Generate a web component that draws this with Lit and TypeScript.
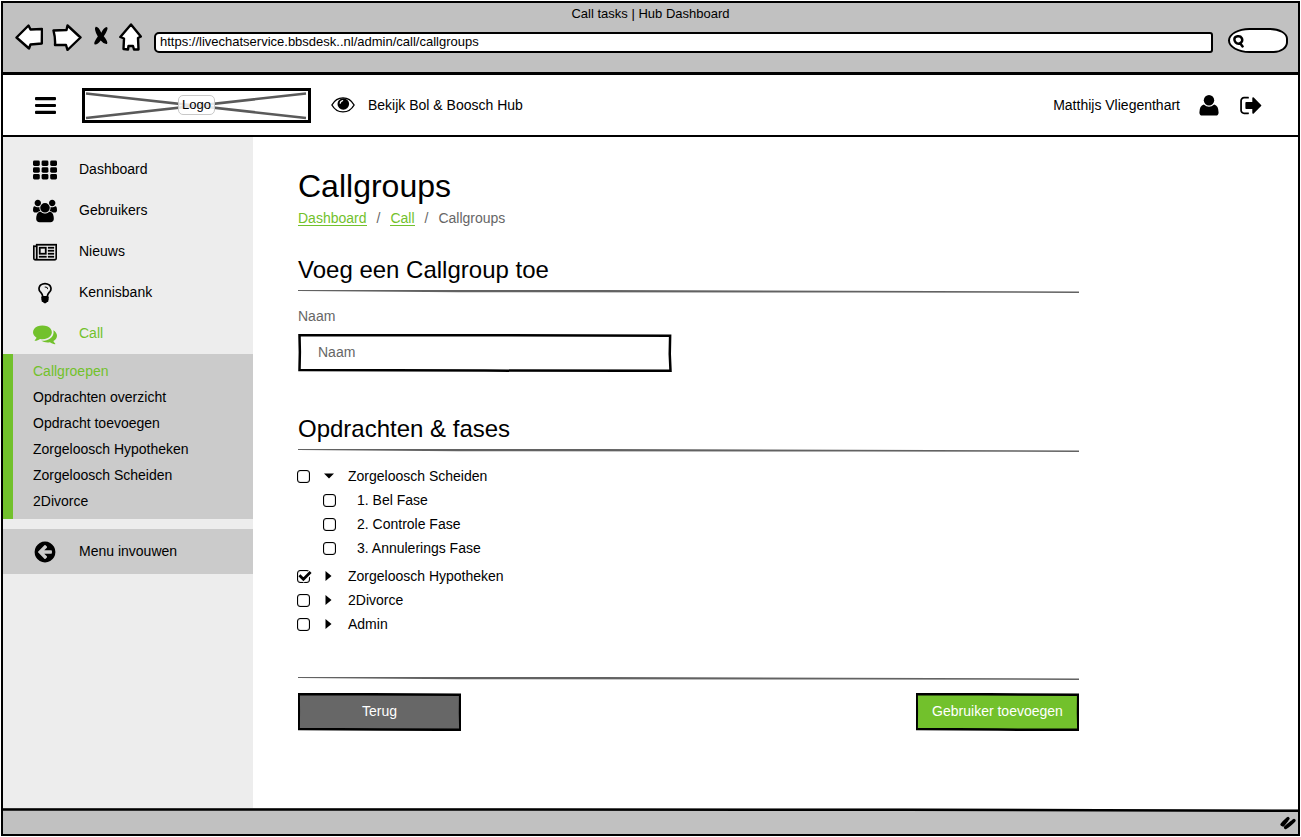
import { LitElement, html, css, svg, nothing } from "lit";
import { customElement, property, state } from "lit/decorators.js";

const ICONS: Record<string, { box: string; body: unknown }> = {
  th: {
    box: "0 -2.5 24 24",
    body: svg`<g>${[0, 8.6, 17.2].map((x) =>
      [0, 6.8, 13.6].map((y) => svg`<rect x=${x} y=${y} width="6.8" height="5.4" rx="1.4"/>`)
    )}</g>`,
  },
  users: {
    box: "0 0 1920 1792",
    body: svg`<path d="M593 896q-162 5-265 128h-134q-82 0-138-40.5t-56-118.5q0-353 124-353 6 0 43.5 21t97.5 42.5 119 21.5q67 0 133-23-5 37-5 66 0 139 81 256zm1071 637q0 120-73 189.5t-194 69.5h-874q-121 0-194-69.5t-73-189.5q0-53 3.5-103.5t14-109 26.5-108.5 43-97.5 62-81 85.5-53.5 111.5-20q10 0 43 21.5t73 48 107 48 135 21.5 135-21.5 107-48 73-48 43-21.5q61 0 111.5 20t85.5 53.5 62 81 43 97.5 26.5 108.5 14 109 3.5 103.5zm-1024-1277q0 106-75 181t-181 75-181-75-75-181 75-181 181-75 181 75 75 181zm704 384q0 159-112.5 271.5t-271.5 112.5-271.5-112.5-112.5-271.5 112.5-271.5 271.5-112.5 271.5 112.5 112.5 271.5zm576 225q0 78-56 118.5t-138 40.5h-134q-103-123-265-128 81-117 81-256 0-29-5-66 66 23 133 23 59 0 119-21.5t97.5-42.5 43.5-21q124 0 124 353zm-128-609q0 106-75 181t-181 75-181-75-75-181 75-181 181-75 181 75 75 181z"/>`,
  },
  news: {
    box: "0 -80 2048 1792",
    body: svg`<path d="M1024 512h-384v384h384v-384zm128 640v128h-640v-128h640zm0-768v640h-640v-640h640zm640 768v128h-512v-128h512zm0-256v128h-512v-128h512zm0-256v128h-512v-128h512zm0-256v128h-512v-128h512zm-1536 960v-960h-128v960q0 26 19 45t45 19 45-19 19-45zm1664 0v-1088h-1536v1088q0 33-11 64h1483q26 0 45-19t19-45zm128-1216v1216q0 80-56 136t-136 56h-1664q-80 0-136-56t-56-136v-1088h256v-128h1792z" stroke="currentColor" stroke-width="24"/>`,
  },
  bulb: {
    box: "0 0 1792 1792",
    body: svg`<path d="M1120 576q0 13-9.5 22.5t-22.5 9.5-22.5-9.5-9.5-22.5q0-46-54-71t-106-25q-13 0-22.5-9.5t-9.5-22.5 9.5-22.5 22.5-9.5q50 0 99.5 16t87 54 37.5 90zm160 0q0-72-34.5-134t-90-101.5-123-62-136.5-22.5-136.5 22.5-123 62-90 101.5-34.5 134q0 101 68 180 10 11 30.5 33t30.5 33q128 153 141 298h228q13-145 141-298 10-11 30.5-33t30.5-33q68-79 68-180zm128 0q0 155-103 268-45 49-74.5 87t-59.5 95.5-34 107.5q47 28 47 82 0 37-25 64 25 27 25 64 0 52-45 81 13 23 13 47 0 46-31.5 71t-77.5 25q-20 44-60 70t-87 26-87-26-60-70q-46 0-77.5-25t-31.5-71q0-24 13-47-45-29-45-81 0-37 25-64-25-27-25-64 0-54 47-82-4-50-34-107.5t-59.5-95.5-74.5-87q-103-113-103-268 0-99 44.5-184.5t117-142 164-89 186.5-32.5 186.5 32.5 164 89 117 142 44.5 184.5z"/>`,
  },
  comments: {
    box: "0 0 1792 1792",
    body: svg`<path d="M1408 768q0 139-94 257t-256.5 186.5-353.5 68.5q-86 0-176-16-124 88-278 128-36 9-86 16h-3q-11 0-20.5-8t-11.5-21q-1-3-1-6.5t.5-6.5 2-6l2.5-5t3.5-5.5 4-5 4.5-5 4-4.5q5-6 23-25t26-29.5 22.5-29 25-38.5 20.5-44q-124-72-195-177t-71-224q0-139 94-257t256.5-186.5 353.5-68.5 353.5 68.5 256.5 186.5 94 257zm384 256q0 120-71 224.5t-195 176.5q10 24 20.5 44t25 38.5 22.5 29 26 29.5 23 25q1 1 4 4.5t4.5 5 4 5 3.5 5.5l2.5 5t2 6 .5 6.5-1 6.5q-3 14-13 22t-22 7q-50-7-86-16-154-40-278-128-90 16-176 16-271 0-472-132 58 4 88 4 161 0 309-45t264-129q125-92 192-212t67-254q0-77-23-152 129 71 204 178t75 230z"/>`,
  },
  fold: {
    box: "10 10 1772 1772",
    body: svg`<path d="M1408 960v-128q0-26-19-45t-45-19h-502l189-189q19-19 19-45t-19-45l-91-91q-18-18-45-18t-45 18l-362 362-91 91q-18 18-18 45t18 45l91 91 362 362q18 18 45 18t45-18l91-91q18-18 18-45t-18-45l-189-189h502q26 0 45-19t19-45zm256-64q0 209-103 385.5t-279.5 279.5-385.5 103-385.5-103-279.5-279.5-103-385.5 103-385.5 279.5-279.5 385.5-103 385.5 103 279.5 279.5 103 385.5z"/>`,
  },
  user: {
    box: "0 0 20 21",
    body: svg`<circle cx="10" cy="5.200" r="5.200"/><path d="M4.800 9.500Q10 14 15.200 9.500 19.500 10.500 19.600 17.500 19.600 20.600 16.800 20.600H3.200Q.4 20.600 .4 17.500 .5 10.500 4.800 9.500Z"/>`,
  },
  signout: {
    box: "64 192 1600 1408",
    body: svg`<path d="M704 1440q0 4 1 20t.5 26.5-3 23.5-10 19.5-20.5 6.5h-320q-119 0-203.5-84.5t-84.5-203.5v-704q0-119 84.5-203.5t203.5-84.5h320q13 0 22.5 9.5t9.5 22.5q0 4 1 20t.5 26.5-3 23.5-10 19.5-20.5 6.5h-320q-66 0-113 47t-47 113v704q0 66 47 113t113 47h312l11.5 1 11.5 3 8 5.5 7 9 2 13.5zm928-544q0 26-19 45l-544 544q-19 19-45 19t-45-19-19-45v-288h-448q-26 0-45-19t-19-45v-384q0-26 19-45t45-19h448v-288q0-26 19-45t45-19 45 19l544 544q19 19 19 45z"/>`,
  },
  eye: {
    box: "0 0 24 16",
    body: svg`<path d="M.9 8C3.500 3.400 7.600 .9 12 .9S20.500 3.400 23.100 8C20.500 12.600 16.400 14.900 12 14.900S3.500 12.600 .9 8Z" fill="#fff" stroke="currentColor" stroke-width="1.400"/><circle cx="12.300" cy="7" r="5.800"/><path d="M9.200 6.200a3 3 0 0 1 2.400-2.500" fill="none" stroke="#fff" stroke-width="1.300" stroke-linecap="round"/>`,
  },
  bars: {
    box: "0 0 22 17",
    body: svg`<rect x="0" y="0" width="21" height="3.200" rx="1"/><rect x="0" y="6.900" width="21" height="3.200" rx="1"/><rect x="0" y="13.800" width="21" height="3.200" rx="1"/>`,
  },
  back: {
    box: "0 0 28 28",
    body: svg`<path class="pen" d="M1.500 14.500 13.500 2.500 15.500 6.500 27 6 26.800 20.500 15.500 21.500 14 25.500Z"/>`,
  },
  forward: {
    box: "0 0 30 28",
    body: svg`<path class="pen" d="M1.500 7.500Q8 7 14.500 7L15.500 2.500 28.500 14.500 15.500 27 14 22 3 22Q3.500 15 1.500 7.500Z"/>`,
  },
  stop: {
    box: "0 0 17 28",
    body: svg`<path d="M4.200 3.700Q7 3.200 9.800 9.800 12 4.500 15.500 4Q17.500 5.500 12.300 13.200 17 19 15.500 21 12.500 21.500 9.200 17.500 6 22 3.200 21.500 1.500 20 6.300 13.500 2 6 4.200 3.700Z"/>`,
  },
  home: {
    box: "0 0 24 28",
    body: svg`<path class="pen" d="M13 1.500 22.800 13.500 20 15 20.500 26.500 16 26.500 15 23 10.500 23 10 26.500 5.500 26 6 15.500 2.300 14Z"/>`,
  },
  search: {
    box: "0 0 12 13",
    body: svg`<path d="M2.200 4.500C2.500 2 7.500 1 9 3.800S8 9 6 9 2 7.500 2.200 4.500ZM7.500 8.500 9.800 11.500" fill="none" stroke="currentColor" stroke-width="2.300" stroke-linecap="round"/>`,
  },
  grip: {
    box: "0 0 18 14",
    body: svg`<path d="M3 8.500Q5 6 9 2.500M6.500 11.500Q10 9.500 15 4.500M4 9 8 4M7.500 10.500 13 6" fill="none" stroke="currentColor" stroke-width="3.300" stroke-linecap="round"/>`,
  },
  check: {
    box: "0 0 17 15",
    body: svg`<path d="M4.800 7 7.800 10.200 15 3" fill="none" stroke="#fff" stroke-width="5"/><path d="M3.400 6.200 7.400 10.200 14.600 3" fill="none" stroke="currentColor" stroke-width="2.800"/>`,
  },
  right: { box: "0 0 10 10", body: svg`<path d="M1.500 0 7.500 5 1.500 10Z"/>` },
  down: { box: "0 0 10 10", body: svg`<path d="M0 2.500H10L5 7.500Z"/>` },
};

@customElement("ui-icon")
class UiIcon extends LitElement {
  @property() name = "";
  static styles = css`
    :host { display: block; flex: none; }
    svg { display: block; width: 100%; height: 100%; fill: currentColor; }
    .pen { fill: #fff; stroke: #000; stroke-width: 2.4; stroke-linejoin: round; }
  `;
  render() {
    const icon = ICONS[this.name];
    return icon ? html`<svg viewBox=${icon.box} aria-hidden="true">${icon.body}</svg>` : nothing;
  }
}

@customElement("sketch-rule")
class SketchRule extends LitElement {
  static styles = css`
    :host { display: block; height: 3px; }
    svg { display: block; width: 100%; height: 100%; }
  `;
  render() {
    return html`<svg viewBox="0 0 780 3" preserveAspectRatio="none" aria-hidden="true">
      <path d="M0 0 300 0 780 1.400V2.900L560 2.500 160 2.200 0 1Z" fill="#626262" />
    </svg>`;
  }
}

/* Hand-drawn frame that stretches round whatever is slotted into it. */
@customElement("sketch-frame")
class SketchFrame extends LitElement {
  static styles = css`
    :host { display: grid; height: 38px; }
    svg, ::slotted(*) { grid-area: 1 / 1; }
    svg { display: block; width: 100%; height: 100%; min-width: 0; fill: var(--frame-fill, #fff); }
    path { stroke: #000; stroke-width: 2.5px; vector-effect: non-scaling-stroke; }
  `;
  render() {
    return html`<svg viewBox="0 0 200 38" preserveAspectRatio="none" aria-hidden="true">
        <path d="M.8 1.300 80 1.200 199 1.800 198.800 20 199.200 36.800 100 36.600 .8 36 1 18Z" />
      </svg>
      <slot></slot>`;
  }
}

interface Group {
  name: string;
  open: boolean;
  checked: boolean;
  phases: string[];
}

@customElement("app-root")
class AppRoot extends LitElement {
  @state() groups: Group[] = [
    { name: "Zorgeloosch Scheiden", open: true, checked: false, phases: ["1. Bel Fase", "2. Controle Fase", "3. Annulerings Fase"] },
    { name: "Zorgeloosch Hypotheken", open: false, checked: true, phases: [] },
    { name: "2Divorce", open: false, checked: false, phases: [] },
    { name: "Admin", open: false, checked: false, phases: [] },
  ];

  menu = [
    { icon: "th", label: "Dashboard" },
    { icon: "users", label: "Gebruikers" },
    { icon: "news", label: "Nieuws" },
    { icon: "bulb", label: "Kennisbank" },
    { icon: "comments", label: "Call", active: true },
  ];

  submenu = [
    "Callgroepen",
    "Opdrachten overzicht",
    "Opdracht toevoegen",
    "Zorgeloosch Hypotheken",
    "Zorgeloosch Scheiden",
    "2Divorce",
  ];

  static styles = css`
    :host {
      --green: #72c12c;
      --chrome: #c1c1c1;
      display: block;
      box-sizing: border-box;
      min-height: 100vh;
      padding: 1px;
      background: #fff;
      color: #000;
      font: 14px/20px "Liberation Sans", Arial, sans-serif;
    }
    *, *::before { box-sizing: border-box; }
    a { color: inherit; text-decoration: none; }
    button, input { font: inherit; color: inherit; margin: 0; padding: 0; border: 0; background: none; }
    button { cursor: pointer; }
    ul, ol { list-style: none; margin: 0; padding: 0; }
    h1, h2 { margin: 0; font-weight: 400; }

    .window { display: flex; flex-direction: column; min-height: calc(100vh - 2px); border: 2px solid #000; }

    .chrome { background: var(--chrome); border-bottom: 3px solid #000; padding-bottom: 19px; }
    .title { text-align: center; font-size: 13px; line-height: 22px; }
    .toolbar { display: flex; align-items: flex-end; padding: 0 10px 0 12px; height: 28px; }
    .tools { display: flex; gap: 9px; padding-bottom: 2px; }
    .tools ui-icon { height: 28px; }
    .w-back { width: 28px; }
    .w-forward { width: 30px; }
    .w-stop { width: 18px; }
    .w-home { width: 24px; }
    .url {
      flex: 1;
      min-width: 0;
      height: 21px;
      margin: 0 15px 0 12px;
      padding: 0 4px 2px;
      background: #fff;
      border: 2px solid #000;
      border-radius: 5px 3px 3px 5px;
      font-size: 13px;
    }
    .search {
      display: flex;
      align-items: center;
      width: 60px;
      height: 25px;
      padding-left: 2px;
      background: #fff;
      border: 2px solid #000;
      border-radius: 24px 20px 16px 24px / 14px 12px 12px 14px;
    }
    .search ui-icon { width: 13px; height: 14px; }
    .search input { min-width: 0; flex: 1; }

    .header { display: flex; align-items: center; height: 62px; padding: 0 36px 0 32px; border-bottom: 2px solid #000; }
    .burger ui-icon { width: 22px; height: 17px; }
    .logo { display: grid; place-items: center; width: 229px; height: 35px; margin: 0 20px 0 25px; border: 3px solid #000; }
    .logo svg, .logo span { grid-area: 1 / 1; }
    .logo svg { width: 100%; height: 100%; }
    .logo span { padding: 0 3px; font-size: 13px; line-height: 18px; border: 1px solid #c8c8c8; border-radius: 5px; background: rgba(255, 255, 255, 0.85); }
    .hub { display: flex; align-items: center; gap: 13px; }
    .hub ui-icon { width: 24px; height: 16px; }
    .account { display: flex; align-items: center; margin-left: auto; }
    .account .user { width: 20px; height: 21px; margin: 0 21px 0 19px; }
    .account .out { width: 22px; height: 19px; }

    .body { flex: 1; display: flex; }
    .sidebar { flex: none; width: 250px; padding-top: 12px; background: #ededed; }
    .item { display: grid; grid-template-columns: 24px 1fr; column-gap: 22px; align-items: center; width: 100%; height: 41px; padding-left: 30px; text-align: left; }
    .item ui-icon { width: 24px; height: 24px; }
    .item span { padding-bottom: 2px; }
    .active { color: var(--green); }
    .submenu { padding: 4px 0 5px 20px; background: #cbcbcb; border-left: 10px solid var(--green); }
    .submenu a { display: block; line-height: 26px; }
    .collapse { height: 45px; margin-top: 10px; background: #cbcbcb; }

    .content { flex: 1; min-width: 0; padding: 29px 45px 40px; }
    .column { max-width: 781px; }
    h1 { font-size: 32px; line-height: 40px; }
    h2 { margin-bottom: 5px; font-size: 24px; line-height: 30px; }
    .crumbs { display: flex; gap: 10px; margin: 2px 0 27px; color: #666; }
    .crumbs li { display: flex; gap: 10px; }
    .crumbs li + li::before { content: "/"; }
    .crumbs a { height: 18px; color: var(--green); border-bottom: 1px solid var(--green); }
    .field { display: grid; gap: 8px; width: 374px; max-width: 100%; margin: 13px 0 42px; color: #666; }
    .field input { min-width: 0; padding: 0 20px 2px; outline-offset: 2px; }
    .field input::placeholder { color: #666; opacity: 1; }

    .tree { margin: 12px 0 41px -1px; }
    .row { display: grid; grid-template-columns: 13px 10px auto; column-gap: 14px; align-items: center; justify-content: start; height: 24px; }
    .phases { margin: 0 0 4px 26px; }
    .phases .row { grid-template-columns: 13px auto; column-gap: 21px; }
    .tick { display: grid; width: 13px; height: 13px; }
    .tick input { grid-area: 1 / 1; appearance: none; width: 13px; height: 13px; border: 1px solid #000; border-radius: 3px; background: #fff; box-shadow: inset 0 0 1px #000; }
    .tick ui-icon { display: none; grid-area: 1 / 1; width: 17px; height: 15px; margin: -1px 0 0 -1px; pointer-events: none; }
    .tick input:checked + ui-icon { display: block; }
    .caret ui-icon { width: 10px; height: 10px; }

    .actions { display: flex; justify-content: space-between; gap: 20px; margin-top: 13px; }
    .actions sketch-frame { width: 163px; }
    .actions button { color: #fff; min-width: 0; padding-bottom: 2px; }
    .grey { --frame-fill: #676767; }
    .green { --frame-fill: #72c12c; }

    .status { background: var(--chrome); }
    .status svg { display: block; width: 100%; height: 4px; }
    .status div { display: flex; justify-content: flex-end; align-items: center; height: 22px; padding-right: 1px; }
    .status ui-icon { width: 18px; height: 14px; }
  `;

  private toggle(group: Group) {
    this.groups = this.groups.map((g) => (g === group ? { ...g, open: !g.open } : g));
  }

  private tick(id: string, checked: boolean) {
    return html`<span class="tick"><input type="checkbox" id=${id} .checked=${checked} /><ui-icon name="check"></ui-icon></span>`;
  }

  render() {
    return html`
      <div class="window">
        <div class="chrome">
          <div class="title">Call tasks | Hub Dashboard</div>
          <div class="toolbar">
            <div class="tools">
              ${["back", "forward", "stop", "home"].map(
                (n) => html`<button aria-label=${n}><ui-icon class="w-${n}" name=${n}></ui-icon></button>`
              )}
            </div>
            <input class="url" aria-label="Adres" value="https://livechatservice.bbsdesk..nl/admin/call/callgroups" />
            <label class="search"><ui-icon name="search"></ui-icon><input type="text" aria-label="Zoeken" /></label>
          </div>
        </div>

        <header class="header">
          <button class="burger" aria-label="Menu"><ui-icon name="bars"></ui-icon></button>
          <a class="logo" href="#">
            <svg viewBox="0 0 223 29" preserveAspectRatio="none" aria-hidden="true">
              <path d="M1 2.500 221 27M1 27 221 2.500" stroke="#5a5a5a" stroke-width="2.600" />
            </svg>
            <span>Logo</span>
          </a>
          <a class="hub" href="#"><ui-icon name="eye"></ui-icon>Bekijk Bol &amp; Boosch Hub</a>
          <div class="account">
            <span>Matthijs Vliegenthart</span>
            <ui-icon class="user" name="user"></ui-icon>
            <button aria-label="Uitloggen"><ui-icon class="out" name="signout"></ui-icon></button>
          </div>
        </header>

        <div class="body">
          <nav class="sidebar">
            ${this.menu.map(
              (m) => html`<a class="item ${m.active ? "active" : ""}" href="#"><ui-icon name=${m.icon}></ui-icon><span>${m.label}</span></a>`
            )}
            <div class="submenu">
              ${this.submenu.map((s, i) => html`<a class=${i === 0 ? "active" : ""} href="#">${s}</a>`)}
            </div>
            <button class="item collapse"><ui-icon name="fold"></ui-icon><span>Menu invouwen</span></button>
          </nav>

          <main class="content">
            <div class="column">
              <h1>Callgroups</h1>
              <ol class="crumbs">
                <li><a href="#">Dashboard</a></li>
                <li><a href="#">Call</a></li>
                <li>Callgroups</li>
              </ol>

              <h2>Voeg een Callgroup toe</h2>
              <sketch-rule></sketch-rule>
              <div class="field">
                <label for="naam">Naam</label>
                <sketch-frame><input id="naam" type="text" placeholder="Naam" /></sketch-frame>
              </div>

              <h2>Opdrachten &amp; fases</h2>
              <sketch-rule></sketch-rule>
              <ul class="tree">
                ${this.groups.map(
                  (g, i) => html`<li>
                    <div class="row">
                      ${this.tick(`g${i}`, g.checked)}
                      <button class="caret" aria-label=${g.name} aria-expanded=${g.open} @click=${() => this.toggle(g)}>
                        <ui-icon name=${g.open ? "down" : "right"}></ui-icon>
                      </button>
                      <label for="g${i}">${g.name}</label>
                    </div>
                    ${g.open && g.phases.length
                      ? html`<ul class="phases">
                          ${g.phases.map(
                            (p, j) => html`<li class="row">${this.tick(`g${i}p${j}`, false)}<label for="g${i}p${j}">${p}</label></li>`
                          )}
                        </ul>`
                      : nothing}
                  </li>`
                )}
              </ul>

              <sketch-rule></sketch-rule>
              <div class="actions">
                <sketch-frame class="grey"><button>Terug</button></sketch-frame>
                <sketch-frame class="green"><button>Gebruiker toevoegen</button></sketch-frame>
              </div>
            </div>
          </main>
        </div>

        <footer class="status">
          <svg viewBox="0 0 1295 4" preserveAspectRatio="none" aria-hidden="true">
            <path d="M0 0H1295V1.500L900 .5 0 0Z" fill="#fff" />
            <path d="M0 .2 900 .5 1295 1.600V4L900 3 0 2.700Z" />
          </svg>
          <div><ui-icon name="grip"></ui-icon></div>
        </footer>
      </div>
    `;
  }
}
